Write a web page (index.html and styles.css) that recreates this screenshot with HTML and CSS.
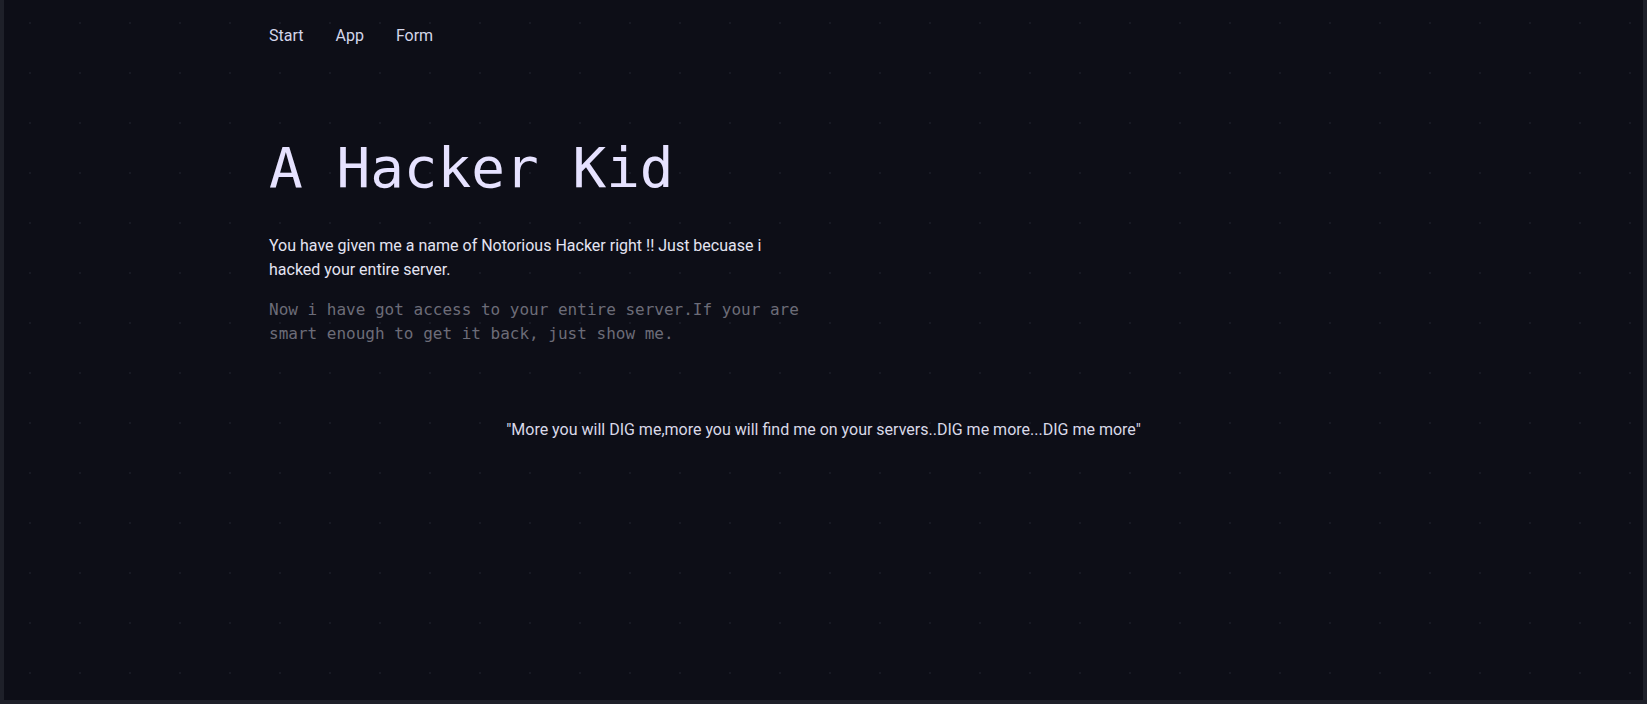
FILE: index.html
```html
<!DOCTYPE html>
<html lang="en">
<head>
<meta charset="utf-8">
<title>A Hacker Kid</title>
<link rel="stylesheet" href="styles.css">
</head>
<body>
<div class="frame">
  <div class="wrap">
    <nav class="nav">
      <a href="#">Start</a>
      <a href="#">App</a>
      <a href="#">Form</a>
    </nav>
    <main class="hero">
      <h1 class="title">A Hacker Kid</h1>
      <p class="lead">You have given me a name of Notorious Hacker right !! Just becuase i hacked your entire server.</p>
      <p class="mono">Now i have got access to your entire server.If your are smart enough to get it back, just show me.</p>
      <p class="quote">"More you will DIG me,more you will find me on your servers..DIG me more...DIG me more"</p>
    </main>
  </div>
</div>
</body>
</html>
```

FILE: styles.css
```css
html, body {
  margin: 0;
  padding: 0;
  background: #0d0e17;
}
body {
  font-family: Roboto, "Noto Sans", sans-serif;
  font-size: 16px;
  line-height: 24px;
  color: #e2e2f0;
}
.frame {
  box-sizing: border-box;
  height: 704px;
  border-left: 4px solid #1e2029;
  border-right: 4px solid #1e2029;
  border-bottom: 4px solid #1e2029;
  background-color: #0d0e17;
  background-image: radial-gradient(circle at center, #181a24 0.9px, transparent 1.2px);
  background-size: 50px 50px;
  background-position: 1px -2px;
  overflow: hidden;
}
.wrap {
  width: 1109px;
  margin: 0 auto;
}
.nav {
  display: flex;
  gap: 32px;
  padding-top: 24px;
}
.nav a {
  color: #d3d6ea;
  text-decoration: none;
}
.hero {
  padding-top: 88px;
}
.title {
  margin: 0 0 34px;
  font-family: "DejaVu Sans Mono", monospace;
  font-weight: 400;
  font-size: 56px;
  line-height: 64px;
  color: #e6e2ff;
}
.lead {
  max-width: 540px;
  margin: 0 0 16px;
  color: #e4e4f2;
}
.mono {
  max-width: 540px;
  margin: 0;
  font-family: "DejaVu Sans Mono", monospace;
  color: #6c6c78;
}
.quote {
  margin: 72px 0 0;
  text-align: center;
  color: #d9d9e8;
}
```
